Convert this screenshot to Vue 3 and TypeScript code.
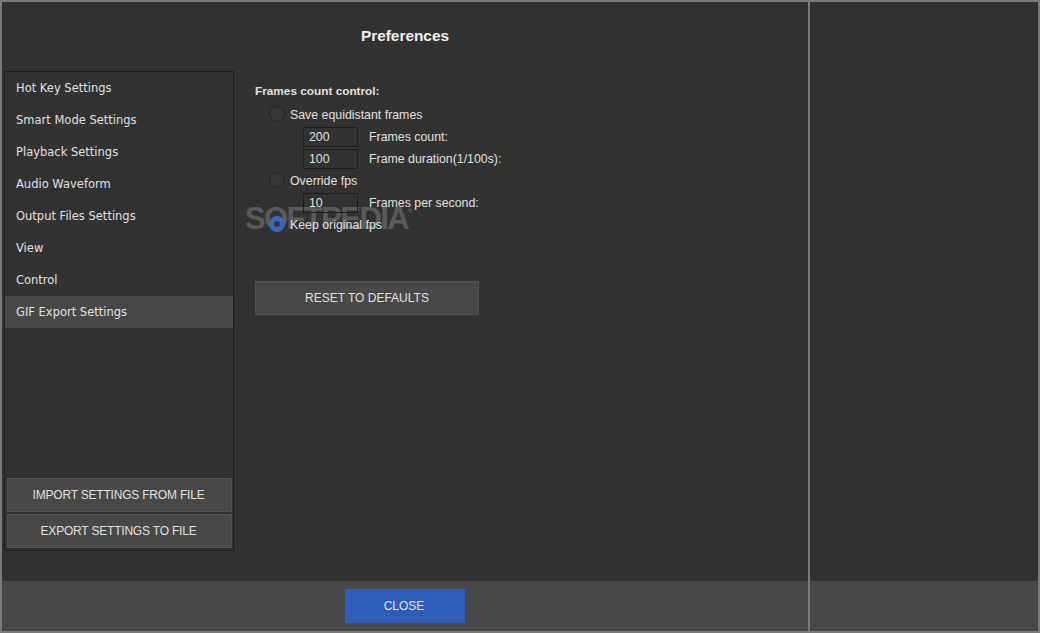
<script setup lang="ts">
const items: string[] = ['Hot Key Settings', 'Smart Mode Settings', 'Playback Settings', 'Audio Waveform', 'Output Files Settings', 'View', 'Control', 'GIF Export Settings']
</script>

<template>
  <div class="window">
    <div class="left">
      <div class="body">
        <h1 class="title">Preferences</h1>
        <div class="columns">
          <aside class="sidebar">
            <ul class="menu">
              <li v-for="(it, i) in items" :key="it" class="item" :class="{ active: i === 7 }">{{ it }}</li>
            </ul>
            <div class="side-btns">
              <button class="btn side">IMPORT SETTINGS FROM FILE</button>
              <button class="btn side">EXPORT SETTINGS TO FILE</button>
            </div>
          </aside>
          <section class="content">
            <div class="heading">Frames count control:</div>
            <div class="watermark">SOFTPEDIA<sup>®</sup></div>
            <div class="radio-row first"><span class="radio"></span><span>Save equidistant frames</span></div>
            <div class="field"><span class="input">200</span><span>Frames count:</span></div>
            <div class="field"><span class="input">100</span><span>Frame duration(1/100s):</span></div>
            <div class="radio-row"><span class="radio"></span><span>Override fps</span></div>
            <div class="field"><span class="input">10</span><span>Frames per second:</span></div>
            <div class="radio-row keep"><span class="radio on"></span><span>Keep original fps</span></div>
            <button class="btn reset">RESET TO DEFAULTS</button>
          </section>
        </div>
      </div>
      <footer class="footer"><button class="close">CLOSE</button></footer>
    </div>
    <div class="right">
      <div class="right-body"></div>
      <div class="right-foot"></div>
    </div>
  </div>
</template>

<style>
html, body { margin: 0; background: #7a7a7a; }
</style>

<style scoped>
.window {
  width: 1040px; height: 633px; box-sizing: border-box;
  border: 2px solid #7a7a7a; display: flex;
  font-family: "Liberation Sans", Arial, sans-serif; font-size: 12.35px; color: #e0e0e0;
  background: #323232;
}
.left { width: 806px; display: flex; flex-direction: column; border-right: 2px solid #7a7a7a; }
.right { flex: 1; display: flex; flex-direction: column; }
.right-body { flex: 1; background: #323232; }
.right-foot { height: 50px; background: #484848; }
.body { flex: 1; background: #323232; position: relative; display: flex; flex-direction: column; min-height: 0; }
.title { margin: 0; height: 69px; padding-top: 25px; box-sizing: border-box; text-align: center; font-size: 15.4px; line-height: 17px; font-weight: 700; color: #f0f0f0; }
.columns { display: flex; flex: 1; min-height: 0; padding-left: 2px; }
.sidebar { width: 230px; height: 480px; box-sizing: border-box; border: 1px solid #1f1f1f; display: flex; flex-direction: column; justify-content: space-between; }
.menu { list-style: none; margin: 0; padding: 0; }
.item { height: 32px; line-height: 32px; padding-left: 11px; font-family: "DejaVu Sans", sans-serif; font-size: 11.5px; color: #e0e0e0; }
.item.active { background: #484848; }
.side-btns { display: flex; flex-direction: column; gap: 2px; padding: 0 1px 2px 2px; }
.btn { background: #484848; border: 1px solid #525252; color: #e0e0e0; font-family: "Liberation Sans", Arial, sans-serif; font-size: 12px; padding: 0; }
.btn.side { height: 34px; letter-spacing: -0.2px; padding: 0 2px 0 0; }
.content { position: relative; padding-left: 21px; flex: 1; }
.heading { font-weight: 700; height: 16px; line-height: 16px; margin-top: 12px; font-size: 11.8px; }
.radio-row { display: flex; align-items: center; gap: 5px; height: 22px; padding-left: 14px; position: relative; }
.radio-row.first { margin-top: 5px; }
.radio { width: 14px; height: 14px; border-radius: 50%; border: 1px solid #222; background: #363636; box-sizing: content-box; margin-top: -2px; }
.radio.on { background: #2c3242; border: 5px solid #3a66bb; width: 6px; height: 6px; }
.field { display: flex; align-items: center; height: 22px; padding-left: 48px; gap: 11px; position: relative; }
.input { height: 18px; line-height: 18px; border: 1px solid #1e1e1e; padding-left: 5px; box-sizing: content-box; width: 48px; }
.reset { display: block; width: 224px; height: 34px; margin-top: 45px; position: relative; }
.watermark { position: absolute; left: 11px; top: 131px; font-size: 31px; font-weight: 700; color: #5a5a5a; letter-spacing: -1.6px; line-height: 34px; white-space: nowrap; }
.watermark sup { font-size: 6px; vertical-align: 16px; line-height: 0; letter-spacing: 0; }
.footer { height: 50px; background: #484848; display: flex; justify-content: center; align-items: center; box-sizing: border-box; }
.close { width: 120px; height: 34px; background: #2f5cba; border: none; color: #dfe6f5; font-family: "Liberation Sans", Arial, sans-serif; font-size: 12px; padding: 0 2px 0 0; }
</style>
